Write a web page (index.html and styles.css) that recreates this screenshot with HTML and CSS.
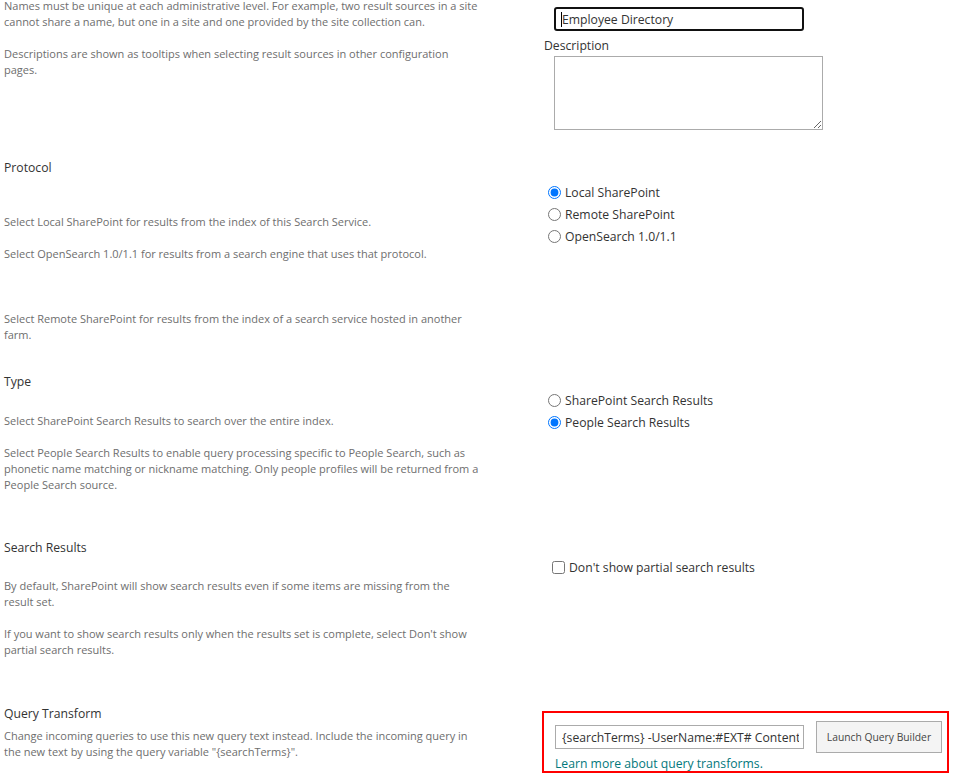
FILE: index.html
```html
<!DOCTYPE html>
<html lang="en">
<head>
<meta charset="utf-8">
<title>Edit Result Source</title>
<link rel="stylesheet" href="styles.css">
</head>
<body>
<div class="page">

  <section class="sec sec-name">
    <div class="left">
      <p class="desc">Names must be unique at each administrative level. For example, two result sources in a site cannot share a name, but one in a site and one provided by the site collection can.</p>
      <p class="desc">Descriptions are shown as tooltips when selecting result sources in other configuration pages.</p>
    </div>
    <div class="right">
      <div class="field-label">Name</div>
      <div class="name-wrap">
        <input class="name-input" type="text" value="Employee Directory">
        <span class="caret"></span>
      </div>
      <div class="field-label desc-label">Description</div>
      <textarea class="desc-area"></textarea>
    </div>
  </section>

  <section class="sec sec-protocol">
    <div class="left">
      <h3 class="title">Protocol</h3>
      <p class="desc first">Select Local SharePoint for results from the index of this Search Service.</p>
      <p class="desc">Select OpenSearch 1.0/1.1 for results from a search engine that uses that protocol.</p>
      <p class="desc far">Select Remote SharePoint for results from the index of a search service hosted in another farm.</p>
    </div>
    <div class="right">
      <label class="opt"><input type="radio" name="protocol" checked><span>Local SharePoint</span></label>
      <label class="opt"><input type="radio" name="protocol"><span>Remote SharePoint</span></label>
      <label class="opt"><input type="radio" name="protocol"><span>OpenSearch 1.0/1.1</span></label>
    </div>
  </section>

  <section class="sec sec-type">
    <div class="left">
      <h3 class="title">Type</h3>
      <p class="desc first">Select SharePoint Search Results to search over the entire index.</p>
      <p class="desc">Select People Search Results to enable query processing specific to People Search, such as phonetic name matching or nickname matching. Only people profiles will be returned from a People Search source.</p>
    </div>
    <div class="right">
      <label class="opt"><input type="radio" name="type"><span>SharePoint Search Results</span></label>
      <label class="opt"><input type="radio" name="type" checked><span>People Search Results</span></label>
    </div>
  </section>

  <section class="sec sec-results">
    <div class="left">
      <h3 class="title">Search Results</h3>
      <p class="desc first">By default, SharePoint will show search results even if some items are missing from the result set.</p>
      <p class="desc">If you want to show search results only when the results set is complete, select Don't show partial search results.</p>
    </div>
    <div class="right">
      <label class="opt check"><input type="checkbox"><span>Don't show partial search results</span></label>
    </div>
  </section>

  <section class="sec sec-query">
    <div class="left">
      <h3 class="title">Query Transform</h3>
      <p class="desc first">Change incoming queries to use this new query text instead. Include the incoming query in the new text by using the query variable "{searchTerms}".</p>
    </div>
    <div class="right">
      <div class="query-box">
        <div class="query-row">
          <input class="query-input" type="text" value="{searchTerms} -UserName:#EXT# ContentClass:urn:content-class:SPSPeople">
          <button class="query-btn" type="button">Launch Query Builder</button>
        </div>
        <a class="query-link" href="#">Learn more about query transforms.</a>
      </div>
    </div>
  </section>

</div>
</body>
</html>
```

FILE: styles.css
```css
html, body {
  margin: 0;
  padding: 0;
  background: #fff;
  overflow: hidden;
}

body {
  font-family: "Open Sans", "Noto Sans", "Liberation Sans", sans-serif;
  color: #333;
}

.page {
  margin-top: -14px;
  padding-left: 4px;
}

.sec {
  display: grid;
  grid-template-columns: 476px 1fr;
  column-gap: 64px;
  align-items: start;
}

.title {
  margin: 0;
  padding-top: 1px;
  font-weight: normal;
  font-size: 12.2px;
  line-height: 18px;
  color: #333;
}

.desc {
  margin: 16px 0 0;
  font-size: 11px;
  line-height: 16px;
  color: #6e6e6e;
}

.desc:first-child { margin-top: 0; }

/* Section 1 */
.sec-name .left { padding-top: 12px; }

.field-label {
  font-size: 12.2px;
  line-height: 18px;
  color: #333;
}

.name-wrap {
  position: relative;
  margin: 3px 0 0 10px;
  width: 250px;
}

.name-input {
  display: block;
  box-sizing: border-box;
  width: 250px;
  height: 24px;
  margin: 0;
  padding: 0 0 0 6px;
  border: 2px solid #111;
  border-radius: 3px;
  font-family: inherit;
  font-size: 12.2px;
  color: #333;
  outline: none;
}

.caret {
  position: absolute;
  left: 7px;
  top: 5px;
  width: 1px;
  height: 15px;
  background: #000;
}

.desc-label { margin-top: 6px; }

.desc-area {
  display: block;
  box-sizing: border-box;
  width: 269px;
  height: 74px;
  margin: 1px 0 0 10px;
  border: 1px solid #ababab;
  padding: 2px;
  font-family: inherit;
  resize: both;
}

/* options */
.opt {
  display: flex;
  align-items: center;
  height: 22px;
  font-size: 12.2px;
  color: #333;
}

.opt input[type="radio"] {
  width: 13px;
  height: 13px;
  margin: 0 4px 0 4px;
  accent-color: #0075ff;
}

.opt.check input[type="checkbox"] {
  width: 13px;
  height: 13px;
  margin: 0 4px 0 8px;
}

/* Protocol */
.sec-protocol { margin-top: 28px; }
.sec-protocol .desc.first { margin-top: 37px; }
.sec-protocol .desc.far { margin-top: 49px; }
.sec-protocol .right { padding-top: 23px; }

/* Type */
.sec-type { margin-top: 29px; }
.sec-type .desc.first { margin-top: 22px; }
.sec-type .right { padding-top: 17px; }

/* Search results */
.sec-results { margin-top: 45px; }
.sec-results .desc.first { margin-top: 21px; }
.sec-results .right { padding-top: 18px; }

/* Query transform */
.sec-query { margin-top: 46px; }
.sec-query .desc.first { margin-top: 5px; }
.sec-query .right { padding-top: 7px; }

.query-box {
  box-sizing: border-box;
  width: 407px;
  height: 62px;
  margin-left: -2px;
  border: 2px solid #f00;
  padding: 8px 0 0 11px;
}

.query-row {
  display: flex;
  align-items: flex-start;
}

.query-input {
  box-sizing: border-box;
  width: 249px;
  height: 24px;
  margin: 4px 0 0 0;
  padding: 0 4px 0 6px;
  border: 1px solid #ababab;
  border-radius: 0;
  font-family: inherit;
  font-size: 12.2px;
  color: #333;
  outline: none;
}

.query-btn {
  box-sizing: border-box;
  width: 126px;
  height: 32px;
  margin-left: 12px;
  padding: 0;
  border: 1px solid #ababab;
  background: #f4f4f4;
  font-family: inherit;
  font-size: 10.3px;
  color: #444;
}

.query-link {
  display: block;
  margin-top: 2px;
  font-size: 12.2px;
  line-height: 18px;
  color: #03787c;
  text-decoration: none;
}
```
